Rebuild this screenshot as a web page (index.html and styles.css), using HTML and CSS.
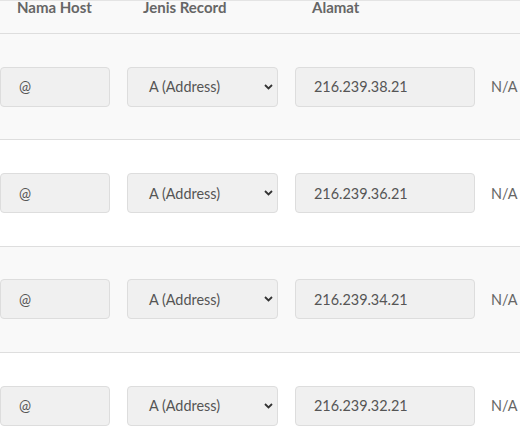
FILE: index.html
```html
<!DOCTYPE html>
<html>
<head>
<meta charset="utf-8">
<link rel="stylesheet" href="styles.css">
</head>
<body>
<div class="table">
  <div class="head grid">
    <div class="th">Nama Host</div>
    <div class="th th2">Jenis Record</div>
    <div class="th">Alamat</div>
    <div></div>
  </div>
  <div class="row odd grid">
    <div class="field">@</div>
    <div class="field select">A (Address)<svg class="chev" width="9" height="6" viewBox="0 0 9 6"><path d="M1 1 L4.5 4.5 L8 1" fill="none" stroke="#333" stroke-width="1.8"/></svg></div>
    <div class="field">216.239.38.21</div>
    <div class="na">N/A</div>
  </div>
  <div class="row grid">
    <div class="field">@</div>
    <div class="field select">A (Address)<svg class="chev" width="9" height="6" viewBox="0 0 9 6"><path d="M1 1 L4.5 4.5 L8 1" fill="none" stroke="#333" stroke-width="1.8"/></svg></div>
    <div class="field">216.239.36.21</div>
    <div class="na">N/A</div>
  </div>
  <div class="row odd grid">
    <div class="field">@</div>
    <div class="field select">A (Address)<svg class="chev" width="9" height="6" viewBox="0 0 9 6"><path d="M1 1 L4.5 4.5 L8 1" fill="none" stroke="#333" stroke-width="1.8"/></svg></div>
    <div class="field">216.239.34.21</div>
    <div class="na">N/A</div>
  </div>
  <div class="row grid">
    <div class="field">@</div>
    <div class="field select">A (Address)<svg class="chev" width="9" height="6" viewBox="0 0 9 6"><path d="M1 1 L4.5 4.5 L8 1" fill="none" stroke="#333" stroke-width="1.8"/></svg></div>
    <div class="field">216.239.32.21</div>
    <div class="na">N/A</div>
  </div>
</div>
</body>
</html>
```
FILE: styles.css
```css
html, body {
  margin: 0;
  padding: 0;
  background: #ffffff;
  font-family: Lato, "Open Sans", sans-serif;
  overflow: hidden;
}
.table {
  width: 520px;
  border-top: 1px solid #e4e4e4;
}
.grid {
  display: grid;
  grid-template-columns: 110px 151px 180px auto;
  column-gap: 17px;
  align-items: center;
}
.head {
  height: 32px;
  align-items: start;
  background: #f9f9f9;
  border-bottom: 1px solid #dedede;
}
.th {
  font-size: 15px;
  font-weight: bold;
  color: #666666;
  line-height: 13px;
  padding-top: 0;
  padding-left: 17px;
}
.th2 {
  padding-left: 16px;
}
.row {
  height: 105.4px;
  border-bottom: 1px solid #dedede;
}
.odd {
  background: #f9f9f9;
}
.field {
  box-sizing: border-box;
  height: 40px;
  background: #f0f0f0;
  border: 1px solid #dddddd;
  border-radius: 4px;
  padding-left: 18px;
  font-size: 14.4px;
  color: #555555;
  display: flex;
  align-items: center;
}
.select {
  padding-left: 21px;
  justify-content: space-between;
  padding-right: 4px;
}
.chev {
  display: block;
}
.na {
  font-size: 14.4px;
  color: #666666;
  margin-left: -1px;
}
```
